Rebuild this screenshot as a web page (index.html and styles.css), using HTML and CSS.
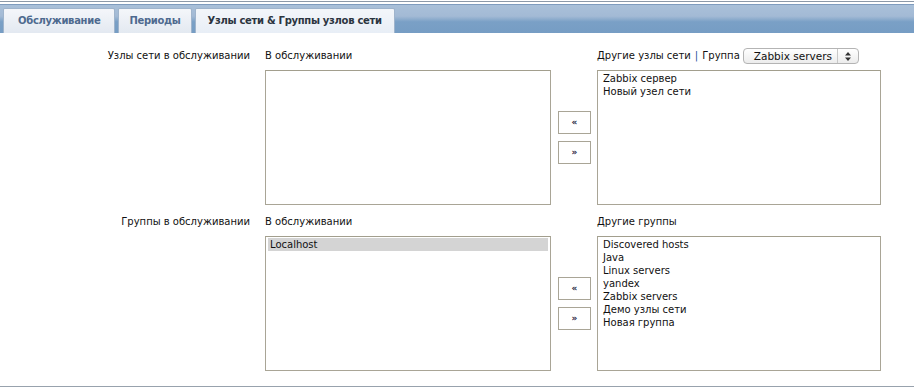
FILE: index.html
```html
<!doctype html>
<html>
  <head>
    <link rel="stylesheet" href="styles.css">
  </head>
  <body>
    <div class="header">
      <div class="tabs">
        <div class="tab">Обслуживание</div>
        <div class="tab tab-short">Периоды</div>
        <div class="tab active">Узлы сети &amp; Группы узлов сети</div>
      </div>
    </div>

    <div class="form">
      <div class="row first">
        <div class="row-label">Узлы сети в обслуживании</div>
        <div class="caption">В обслуживании</div>
        <div></div>
        <div class="caption">
          Другие узлы сети <span class="sep">|</span> Группа
          <span class="select">
            <span class="select-text">Zabbix servers</span>
            <span class="select-arrows">
              <svg width="6" height="9" viewBox="0 0 6 9"><path d="M0 3.5 L3 0 L6 3.5 Z M0 5.5 L3 9 L6 5.5 Z" fill="#333"/></svg>
            </span>
          </span>
        </div>

        <div></div>
        <div class="list"></div>
        <div class="buttons">
          <div class="btn">&laquo;</div>
          <div class="btn">&raquo;</div>
        </div>
        <div class="list">
          <div class="opt">Zabbix сервер</div>
          <div class="opt">Новый узел сети</div>
        </div>
      </div>

      <div class="row">
        <div class="row-label">Группы в обслуживании</div>
        <div class="caption">В обслуживании</div>
        <div></div>
        <div class="caption">Другие группы</div>

        <div></div>
        <div class="list">
          <div class="opt selected">Localhost</div>
        </div>
        <div class="buttons">
          <div class="btn">&laquo;</div>
          <div class="btn">&raquo;</div>
        </div>
        <div class="list">
          <div class="opt">Discovered hosts</div>
          <div class="opt">Java</div>
          <div class="opt">Linux servers</div>
          <div class="opt">yandex</div>
          <div class="opt">Zabbix servers</div>
          <div class="opt">Демо узлы сети</div>
          <div class="opt">Новая группа</div>
        </div>
      </div>
    </div>

    <div class="footer"></div>
  </body>
</html>
```

FILE: styles.css
```css
body {
  margin: 0;
  background: #fff;
  font-family: "DejaVu Sans", Verdana, sans-serif;
  font-size: 10px;
  color: #111;
}

.header {
  margin-top: 1px;
  border-top: 1px solid #8c99a8;
  padding-top: 2px;
}

.tabs {
  display: flex;
  gap: 3px;
  height: 29px;
  padding-left: 3px;
  box-sizing: border-box;
  align-items: flex-end;
  border-top: 1px solid #7f9cbe;
  background: linear-gradient(#a9c0d9, #a3bad5 40%, #7aa0c6 60%, #769dc4);
}

.tab {
  height: 25px;
  line-height: 24px;
  padding: 0 14px;
  box-sizing: border-box;
  font-size: 10px;
  font-weight: bold;
  letter-spacing: -0.3px;
  color: #4e6a8f;
  background: linear-gradient(#f4f6fa, #e3e9f1);
  border: 1px solid #9fb4cc;
  border-bottom: none;
  border-radius: 2px 2px 0 0;
}

.tab-short {
  padding: 0 10px;
}

.tab.active {
  padding: 0 12px;
  color: #2b3440;
  background: linear-gradient(#f3f6fa, #e8eef6);
}

.form {
  padding-top: 15px;
}

.row {
  display: grid;
  grid-template-columns: 265px 286px 46px 284px;
  grid-template-rows: 22px 135px;
}

.row + .row {
  margin-top: 9px;
}

.row-label {
  text-align: right;
  padding-right: 15px;
  line-height: 16px;
}

.caption {
  line-height: 16px;
  height: 16px;
  white-space: nowrap;
  display: flex;
  align-items: center;
}

.sep {
  color: #1f4f9c;
  margin: 0 4px;
}

.select {
  display: inline-flex;
  align-items: center;
  margin-left: 3px;
  width: 116px;
  height: 16px;
  box-sizing: border-box;
  border: 1px solid #b4b4b4;
  border-radius: 4px;
  background: linear-gradient(#ffffff, #ececec);
}

.select-text {
  flex: 1;
  padding-left: 10px;
  font-size: 10.5px;
}

.select-arrows {
  width: 20px;
  height: 14px;
  border-left: 1px solid #c8c8c8;
  display: flex;
  align-items: center;
  justify-content: center;
}

.list {
  border: 1px solid #a9a596;
  border-top-color: #a29e8d;
  padding: 1px 2px;
  box-sizing: border-box;
  background: #fff;
}

.opt {
  line-height: 13px;
  padding: 0 2px 0 3px;
  white-space: nowrap;
}

.opt.selected {
  background: #d4d4d4;
  padding-left: 2px;
}

.buttons {
  display: flex;
  flex-direction: column;
  align-items: center;
  justify-content: center;
  gap: 7px;
  padding-left: 1px;
}

.btn {
  width: 33px;
  height: 23px;
  box-sizing: border-box;
  border: 1px solid #a9a596;
  background: #fff;
  font-size: 9px;
  font-weight: bold;
  line-height: 21px;
  text-align: center;
  color: #2a2a44;
}

.footer {
  margin-top: 15px;
  border-top: 2px solid #98a2ad;
  height: 2px;
  background: #e6edf5;
}
```
